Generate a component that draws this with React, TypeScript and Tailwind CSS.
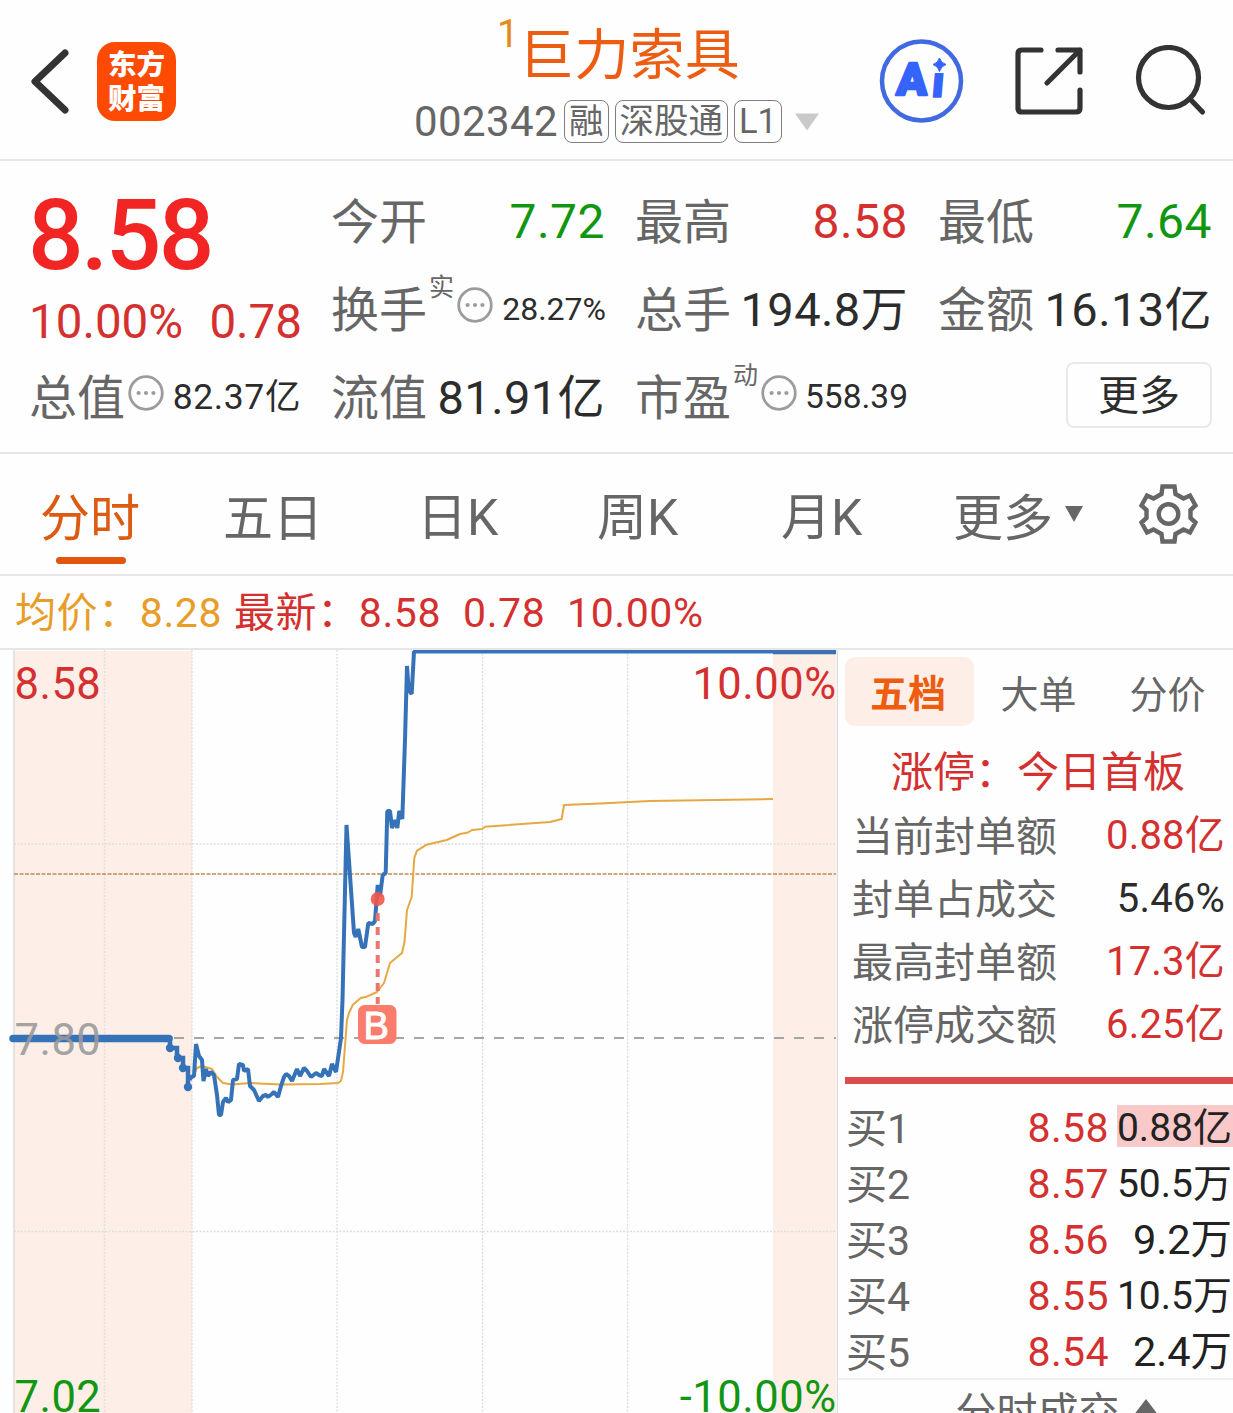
import React, { ReactNode } from "react";
import clsx from "clsx";

const RED = "text-[#d4302f]";
const GREEN = "text-[#119611]";
const DARK = "text-[#2c2c2c]";

const PRICE_LINE =
  "190,1080 191,1077 194,1076 196,1044 199,1056 202,1060 203.5,1081 206,1069 208,1076 211,1072 214,1075 217,1095 219,1115 221,1115 223,1102 226,1098 228,1102 231,1100 233,1080 237,1079 239,1064 243,1065 244,1071 248,1069 250,1086 254,1090 259,1101 263,1096 266,1095 268,1097 272,1094 274,1092 278,1097 281,1086 284,1077 286,1074 289,1076 292,1081 297,1069 300,1076 304,1068 307,1071 311,1077 316,1073 319,1075 322,1076 324,1069 329,1076 332,1064 336,1072 341,1038 342.5,1000 346.5,825 354,933 355.7,937 358.3,929 362,947 365,947 368.3,923 372.7,924 375,921 377.7,885 380,896 382.7,875 385.7,873 387.3,811 390,811 392,828 394.7,820 397.3,828 399.3,811 402.3,819 405,740 407,666 408.7,690 411.7,694 414,651.5 773,651.5";

const AVG_LINE =
  "192,1078 197,1068 202,1066 212,1069 217,1077 223,1083 232,1084.5 250,1083 280,1084.5 320,1084 338,1083 341,1081 343,1072 347,1020 349,1013 352.7,1005 360.7,998 366.7,996.7 377,992 384,983 390,963 402,953 404.5,942 407,910 411.7,897 414.3,858 417,850.7 426.7,844.7 446.7,840 460,834 468,832.5 472,830 482,829 485,826.7 550,822 561.7,819 564,805 600,803.5 650,801 773,799";

const Tag = ({ children }: { children: ReactNode }) => (
  <span className="flex h-[43px] items-center rounded-[8px] border-[1.5px] border-[#7d7d7d] px-[4px] text-[34.5px] leading-none">
    {children}
  </span>
);

const More = () => (
  <svg className="h-9 w-9 shrink-0" viewBox="0 0 36 36" fill="none">
    <circle cx="18" cy="18" r="16.3" stroke="#9c9c9c" strokeWidth="2.8" />
    <circle cx="10.6" cy="18" r="2.1" fill="#9c9c9c" />
    <circle cx="18" cy="18" r="2.1" fill="#9c9c9c" />
    <circle cx="25.4" cy="18" r="2.1" fill="#9c9c9c" />
  </svg>
);

type StatProps = {
  label: string;
  value: string;
  color?: string;
  sup?: string;
  more?: boolean;
  size?: string;
};

const Stat = ({ label, value, color = DARK, sup, more, size = "text-[48px] tracking-[0.5px] pt-[2px]" }: StatProps) => (
  <div className="flex h-[88px] items-center whitespace-nowrap">
    <span className="-ml-px pt-[4px] text-[48px] text-[#666]">{label}</span>
    {sup && <span className="mb-[42px] ml-[2px] w-[25px] text-[25px] text-[#666]">{sup}</span>}
    {more && <span className="mb-[8px] ml-[3px]"><More /></span>}
    <span className={clsx("ml-auto", color, size)}>{value}</span>
  </div>
);

const Header = () => (
  <header className="flex h-[161px] items-start border-b-2 border-[#e6e6e6]">
    <svg className="ml-[30px] mt-[48px] h-[68px] w-[40px]" viewBox="0 0 40 68" fill="none">
      <path d="M35 5 L5 33.5 L35 62" stroke="#333" strokeWidth="7" strokeLinecap="round" strokeLinejoin="round" />
    </svg>
    <div className="ml-[27px] mt-[42px] flex h-[79px] w-[79px] flex-col items-center justify-center rounded-[18px] bg-[#ff4a03] pt-[2px] text-[28.5px] font-black leading-[34px] text-white">
      <span>东方</span>
      <span>财富</span>
    </div>
    <div className="ml-[238px] w-[412px]">
      <div className="flex h-[96px] pl-[83px] text-[#ec5d12]">
        <span className="mt-[12px] text-[39px] leading-[44px] text-[#e58a20]">1</span>
        <span className="mt-[17px] whitespace-nowrap text-[55px] leading-[76px] tracking-[0.3px]">巨力索具</span>
      </div>
      <div className="mt-[4px] flex h-[43px] items-center gap-[6px] text-[#666]">
        <span className="pt-px text-[42px] leading-none tracking-[0.4px]">002342</span>
        <Tag>融</Tag>
        <Tag>深股通</Tag>
        <Tag>L1</Tag>
        <svg className="ml-[6px] h-[18px] w-[26px]" viewBox="0 0 26 18">
          <path d="M1 0.5 H25 L13 17.5 Z" fill="#c9c9c9" />
        </svg>
      </div>
    </div>
    <svg className="ml-[53px] mt-[38px] h-[86px] w-[86px]" viewBox="0 0 86 86" fill="none" strokeLinejoin="round">
      <circle cx="42.5" cy="43" r="39.5" stroke="#4169e1" strokeWidth="4.5" />
      <text x="17" y="57" fill="#3564fb" stroke="#3564fb" strokeWidth="2.500" fontSize="45" fontWeight="900" transform="skewX(-3) translate(3 0)">A</text>
      <text x="53" y="59.500" fill="#3564fb" stroke="#3564fb" strokeWidth="1.500" fontSize="44" fontWeight="900" transform="skewX(-5) translate(4 0)">ı</text>
      <path d="M60.500 20 Q62 25 67 26.500 Q62 28 60.500 33.500 Q59 28 54 26.500 Q59 25 60.500 20 Z" fill="#3564fb" stroke="#3564fb" />
    </svg>
    <svg className="ml-[49.500px] mt-[46px] h-[70px] w-[70px]" viewBox="0 0 70 70" fill="none" stroke="#333" strokeWidth="5.200" strokeLinecap="round" strokeLinejoin="round">
      <path d="M26 4 H7 Q3 4 3 8 V62 Q3 66 7 66 H61 Q65 66 65 62 V44" />
      <path d="M43 4 H65 V26 M65 4 L32 37" />
    </svg>
    <svg className="ml-[50.500px] mt-[45px] h-[74px] w-[74px]" viewBox="0 0 74 74" fill="none" stroke="#333" strokeWidth="5.200" strokeLinecap="round">
      <circle cx="33.500" cy="32.500" r="30" />
      <path d="M55 54 L67.500 67" />
    </svg>
  </header>
);

const Quote = () => (
  <section className="flex h-[293px] gap-[31px] border-b-2 border-[#e6e6e6] pl-[30px] pt-[16px]">
    <div className="w-[271px]">
      <div className="-ml-[2px] flex h-[114px] items-center pt-[4px] text-[98px] font-medium leading-none tracking-[-2.6px] text-[#f02524]">8.58</div>
      <div className={clsx("-ml-px flex h-[62px] items-center justify-between pt-[2px] text-[47.5px]", RED)}>
        <span>10.00%</span>
        <span className="-mr-px">0.78</span>
      </div>
      <Stat label="总值" value="82.37亿" more size="text-[35.5px] tracking-[0.6px] pt-[2px]" />
    </div>
    <div className="w-[273px]">
      <Stat label="今开" value="7.72" color={GREEN} />
      <Stat label="换手" value="28.27%" sup="实" more size="text-[32px] -mr-px" />
      <Stat label="流值" value="81.91亿" size="text-[47px] tracking-[0.4px] pt-[2px]" />
    </div>
    <div className="w-[272px]">
      <Stat label="最高" value="8.58" color={RED} />
      <Stat label="总手" value="194.8万" size="text-[47px] tracking-[0.4px] pt-[2px]" />
      <Stat label="市盈" value="558.39" sup="动" more size="text-[33.5px]" />
    </div>
    <div className="w-[273px]">
      <Stat label="最低" value="7.64" color={GREEN} />
      <Stat label="金额" value="16.13亿" size="text-[47px] tracking-[0.4px] pt-[2px]" />
      <div className="flex h-[88px] items-center justify-end">
        <button className="mb-[5px] h-[66px] w-[146px] rounded-[8px] border-2 border-[#e9e9e9] pt-[4px] text-[41px] leading-none text-[#2c2c2c]">更多</button>
      </div>
    </div>
  </section>
);

const Tabs = () => (
  <nav className="flex h-[122px] border-b-2 border-[#e6e6e6] pl-[40px] text-[50px] leading-[72px] text-[#666]">
    <div className="flex w-[183px] flex-col pt-[29px] text-[#dd5a12]">
      <span>分时</span>
      <span className="ml-[16px] mt-[2px] h-[7px] w-[70px] rounded-full bg-[#e0560c]" />
    </div>
    <span className="w-[194px] pt-[29px]">五日</span>
    <span className="w-[180px] pt-[28px]">日K</span>
    <span className="w-[184px] pt-[28px]">周K</span>
    <span className="w-[172px] pt-[28px]">月K</span>
    <span className="w-[112px] pt-[29px]">更多</span>
    <svg className="mt-[52px] h-[16px] w-[18px]" viewBox="0 0 18 16">
      <path d="M0 0 H18 L9 16 Z" fill="#666" />
    </svg>
    <svg className="ml-[54px] mt-[29px] h-[62px] w-[62px]" viewBox="0 0 62 62" fill="none" stroke="#666" strokeWidth="4.400">
      <path d="M25.500 3.500 H37.500 L38.500 11 L46.500 15.500 L53 12.500 L58.500 22.500 L53.500 27 V35 L58.500 39.500 L53 49.500 L46.500 46.500 L38.500 51 L37.500 58.500 H25.500 L24.500 51 L16.500 46.500 L10 49.500 L4.500 39.500 L9.500 35 V27 L4.500 22.500 L10 12.500 L16.500 15.500 L24.500 11 Z" />
      <circle cx="31.500" cy="31" r="9.800" />
    </svg>
  </nav>
);

const Chart = () => (
  <svg className="h-[763px] w-[838px] shrink-0" viewBox="0 650 838 763" fill="none" fontSize="43.500" letterSpacing="0.5">
    <rect x="14" y="651" width="178" height="762" fill="#fdeee7" />
    <rect x="773" y="651" width="63" height="762" fill="#fdeee7" />
    <path d="M14 650 V1413 M837.500 650 V1413" stroke="#dcdcdc" strokeWidth="1.500" />
    <path d="M104.500 650 V1413 M192 650 V1413 M337 650 V1413 M482.500 650 V1413 M627.500 650 V1413 M14 844 H836 M14 1231.500 H836" stroke="#dedede" strokeWidth="1.300" strokeDasharray="2 1.500" />
    <path d="M174 1038 H836" stroke="#a5a5a5" strokeWidth="2.200" strokeDasharray="10 10" />
    <path d="M14 874 H836" stroke="#c08f50" strokeWidth="1.600" strokeDasharray="4 1.500" />
    <polyline points={AVG_LINE} stroke="#e5a843" strokeWidth="2" strokeLinejoin="round" />
    <polyline points={PRICE_LINE} stroke="#3572b8" strokeWidth="4" strokeLinejoin="bevel" />
    <path d="M773 651.500 H836" stroke="#3d70b2" strokeWidth="5.500" />
    <path d="M13 1038.500 H170 V1048 H177 V1058 H183 V1068 H188 V1087" stroke="#3572b8" strokeWidth="4.500" />
    <path d="M13 1038.500 H169" stroke="#3572b8" strokeWidth="7.500" strokeLinecap="round" />
    <g fill="#3572b8">
      <circle cx="170" cy="1048" r="4.200" />
      <circle cx="178" cy="1058" r="4.200" />
      <circle cx="183" cy="1068" r="4.200" />
      <circle cx="188" cy="1087" r="4.200" />
    </g>
    <path d="M377.700 913 V1004" stroke="#e8776d" strokeWidth="4" strokeDasharray="8 6" />
    <circle cx="377.700" cy="899" r="7" fill="#f0564a" fillOpacity="0.9" />
    <rect x="358" y="1005" width="38.500" height="39" rx="6.500" fill="#fa7c6d" />
    <text x="376.500" y="1038.500" fontSize="38" fill="#fff" stroke="#fff" textAnchor="middle" className="font-['Liberation_Sans']">B</text>
    <text x="14.500" y="698.500" fill="#d4302f">8.58</text>
    <text x="836.500" y="698.500" fill="#d4302f" textAnchor="end">10.00%</text>
    <text x="14.500" y="1055" fill="#999" fillOpacity="0.9">7.80</text>
    <text x="14.500" y="1412" fill="#119611">7.02</text>
    <text x="836.500" y="1412" fill="#119611" textAnchor="end">-10.00%</text>
  </svg>
);

const SEALS = [
  { label: "当前封单额", value: "0.88亿", color: RED },
  { label: "封单占成交", value: "5.46%", color: DARK },
  { label: "最高封单额", value: "17.3亿", color: RED },
  { label: "涨停成交额", value: "6.25亿", color: RED },
];

const BIDS = [
  { label: "买1", price: "8.58", amount: "0.88亿" },
  { label: "买2", price: "8.57", amount: "50.5万" },
  { label: "买3", price: "8.56", amount: "9.2万" },
  { label: "买4", price: "8.55", amount: "10.5万" },
  { label: "买5", price: "8.54", amount: "2.4万" },
];

const OrderBook = () => (
  <aside className="w-[395px] shrink-0 whitespace-nowrap text-[41px] leading-none">
    <div className="ml-[7px] flex h-[85px] items-start pt-[7px] text-[38px] text-[#666]">
      <span className="flex h-[69px] w-[129px] items-center justify-center rounded-[10px] bg-[#fdeee7] pr-[3px] pt-[4px] font-bold text-[#ee5c10]">五档</span>
      <span className="flex h-[69px] w-[129px] items-center justify-center pt-[6px]">大单</span>
      <span className="flex h-[69px] w-[129px] items-center justify-center pt-[6px]">分价</span>
    </div>
    <div className={clsx("flex h-[69px] items-center pl-[53px] pt-[7px] text-[42px]", RED)}>涨停：今日首板</div>
    {SEALS.map((s) => (
      <div key={s.label} className="flex h-[63px] items-center justify-between pl-[14px] pr-[8px]">
        <span className="pt-[4px] text-[#666]">{s.label}</span>
        <span className={clsx("text-[40px] tracking-[0.2px]", s.color)}>{s.value}</span>
      </div>
    ))}
    <div className="ml-[7px] mt-[21px] h-[7px] bg-[#db4c4c]" />
    <div className="h-[294px] pt-[15px]">
      {BIDS.map((b, i) => (
        <div key={b.label} className="flex h-[56px] items-center pl-[8px]">
          <span className="w-[100px] pt-[4px] text-[#666]">{b.label}</span>
          <span className={clsx("ml-auto mr-[8px] pt-[3px] tracking-[0.4px]", RED)}>{b.price}</span>
          <span
            className={clsx(
              "mb-[2px] flex h-[42px] w-[116px] items-center justify-end pr-px pt-[4px] text-[#222]",
              b.amount.length > 4 ? "text-[39px]" : "text-[41.5px]",
              i === 0 && "bg-[#f9c9c9]"
            )}
          >
            {b.amount}
          </span>
        </div>
      ))}
    </div>
    <div className="flex h-[35px] items-start justify-center gap-[13px] overflow-hidden border-t-2 border-[#f0f0f0] pl-[43px] pt-[13px] text-[#666]">
      <span>分时成交</span>
      <svg className="mt-[6px] h-[22px] w-[26px] shrink-0" viewBox="0 0 26 22">
        <path d="M13 0 L26 17 H0 Z" fill="#666" />
      </svg>
    </div>
  </aside>
);

const App = () => {
  return (
    <div
      lang="zh-CN"
      className="h-[1413px] w-[1233px] overflow-hidden bg-[#fefefe] font-[Roboto,'Noto_Sans_CJK_SC',sans-serif]"
    >
      <Header />
      <Quote />
      <Tabs />
      <div className="flex h-[74px] items-center border-b-2 border-[#e6e6e6] pl-[15px] pt-[3px] text-[41px] tracking-[0.6px]">
        <span className="w-[219px] text-[#e79d28]">均价：8.28</span>
        <span className={clsx("w-[229px]", RED)}>最新：8.58</span>
        <span className={clsx("w-[104px]", RED)}>0.78</span>
        <span className={RED}>10.00%</span>
      </div>
      <main className="flex">
        <Chart />
        <OrderBook />
      </main>
    </div>
  );
};

export default App;
